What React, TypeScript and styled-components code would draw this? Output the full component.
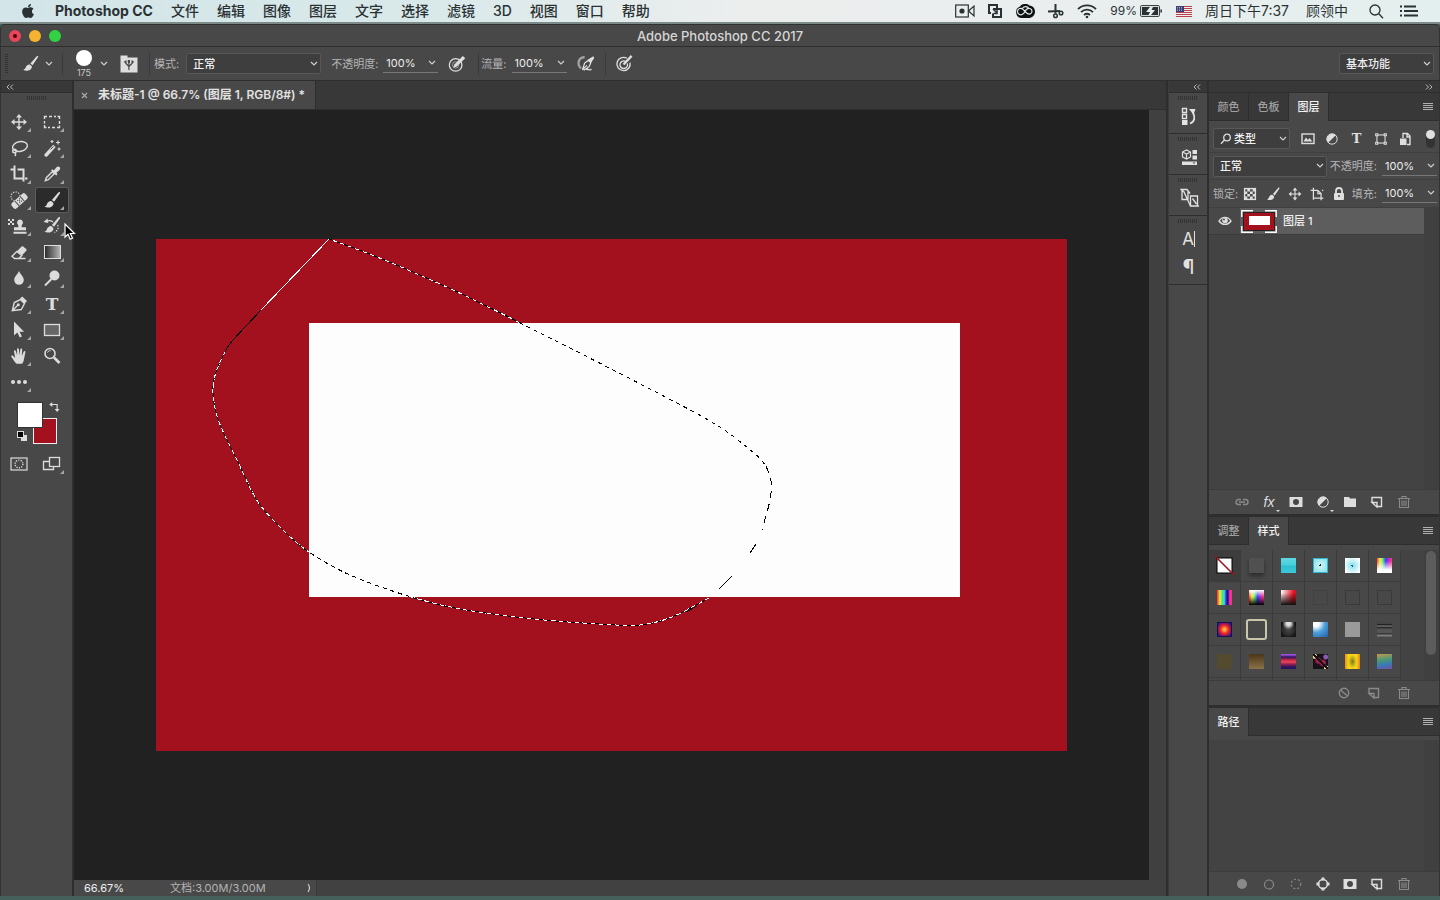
import React, { useId } from 'react';
import styled, { createGlobalStyle, css } from 'styled-components';
import { FaApple } from 'react-icons/fa';

const color = {
  panel: '#484848',
  list: '#434343',
  dark: '#383838',
  line: '#2e2e2e',
  soft: '#3c3c3c',
  text: '#dedede',
  dim: '#b4b4b4',
  field: '#3e3e3e',
  red: '#a3111f',
};

const GlobalStyle = createGlobalStyle`
  *, *::before, *::after { box-sizing: border-box; }
  body {
    margin: 0;
    background: #45605a;
    font-family: Inter, "Noto Sans CJK SC", sans-serif;
    font-size: 11px;
    line-height: 16px;
    color: ${color.text};
  }
  button, input, select {
    font: inherit;
    color: inherit;
    margin: 0;
    padding: 0;
    border: 0;
    background: none;
    border-radius: 0;
  }
  svg { display: block; flex: none; }
`;

/* ---------- icons ---------- */

const line = { fill: 'none', stroke: 'currentColor', strokeWidth: 1.4 } as const;
const solid = { fill: 'currentColor' } as const;

const brushShape = (
  <g {...solid}>
    <path d="M17.8 2.2c.5.4.3 1-.1 1.6l-5.6 8-2.2-1.8 6.4-7.5c.5-.5 1.100-.7 1.500-.3z" />
    <path d="M9.200 11l2.200 1.900c.3 2.600-1.900 4.600-4.800 4.700-1.500 0-3-.3-4.200-1.100 1.600-.2 2-1.100 2.600-2.500.7-1.700 2.300-3.200 4.200-3z" />
  </g>
);

const icons: Record<string, React.ReactNode> = {
  move: (
    <g>
      <path {...line} d="M10 4v12M4 10h12" />
      <path {...solid} d="M10 2l3 3.500H7zM10 18l3-3.500H7zM2 10l3.500-3v6zM18 10l-3.500-3v6z" />
    </g>
  ),
  marquee: <path {...line} d="M2.500 7V4.500H5M7 4.500h3M12 4.500h2M15.500 4.500h2V7M17.500 9v3M17.500 13.500v2H15M13 15.500h-3M8 15.500H6M4.500 15.500h-2V13M2.500 11.500V9" />,
  lasso: (
    <g {...line}>
      <ellipse cx="11" cy="8.500" rx="7.500" ry="4.800" transform="rotate(-12 11 8.500)" />
      <circle cx="5.500" cy="13" r="1.800" />
      <path d="M5.500 14.500c1.600 1 1.400 2.500.2 3.500" />
    </g>
  ),
  wand: (
    <g>
      <path {...solid} d="M2.500 16.200l8.700-9.500 2.500 2.400-8.500 9.300c-1.600.9-3.600-.7-2.700-2.200z" />
      <path d="M8.500 11.500l3-3.200" stroke="#484848" strokeWidth="1" />
      <path {...line} strokeWidth="1.200" d="M10 2v3M8.500 3.500h3M16 2.500v4M14 4.500h4M17 9.500v3M15.500 11h3" />
    </g>
  ),
  crop: <path {...line} strokeWidth="2" d="M5.500 1.500v13h9M8.500 5.500h6v9M1.500 5.500h4M14.500 14.500v3M16 14.500h2.500" />,
  eyedropper: (
    <g>
      <path {...line} d="M3.300 16.700l1-3 6-6 2 2-6 6z" />
      <path {...solid} d="M9 6.500l1.400-1.300 1.400 1.200 2.500-3c1-1.300 2.500-1.200 3.300-.3.900 1 .7 2.300-.3 3.200l-2.900 2.500 1.200 1.300L14.200 11.500z" />
    </g>
  ),
  healing: (
    <g>
      <circle {...line} cx="6.500" cy="6.500" r="4.500" strokeDasharray="1.200 1.400" strokeWidth="1.200" />
      <g transform="rotate(-42 10.500 11)">
        <rect {...solid} x="1.500" y="7.500" width="18" height="7" rx="2" />
        <path d="M7 7.500v7M14 7.500v7" stroke="#484848" />
        <path d="M9 9.500h1M11.500 9.500h1M9 12.500h1M11.500 12.500h1M10.200 11h1" stroke="#484848" strokeWidth="1.300" />
      </g>
    </g>
  ),
  brush: brushShape,
  stamp: (
    <g {...solid}>
      <path d="M11 3.500a3 3 0 012 5.200c-.5.800-.5 1.600-.3 2.500h4.300v3H5v-3h4.300c.2-.9.200-1.700-.3-2.500a3 3 0 012-5.200zM4.500 15.700h13v2h-13z" />
      <path d="M-1 3h2v2h-2zM3 3h2v2H3zM1 5h2v2H1zM-1 7h2v2h-2zM3 7h2v2H3z" />
    </g>
  ),
  history: (
    <g>
      <g transform="translate(0 -1)">{brushShape}</g>
      <path {...line} d="M4 5.500c3-1.500 5-1 7 .500" />
      <path {...solid} d="M1.500 6l4-3.500.800 4.500z" />
      <path {...line} strokeDasharray="1.300 1.500" d="M15.500 9c1.500 2.500.5 5.500-3 7.500" />
    </g>
  ),
  eraser: (
    <g>
      <path {...solid} d="M8 9.200l4.300-4.400c.6-.6 1.200-.7 1.900-.2l3 2.500c.6.500.6 1.100.1 1.700l-4.200 4.500z" />
      <path {...line} d="M7.800 9.500L3 14.300l2.500 2.200h4.300l3-3zM9 16.500h7.500" />
    </g>
  ),
  drop: <path {...solid} d="M10 3c1 3 4.800 5.500 4.800 9a4.800 4.800 0 01-9.600 0C5.200 8.500 9 6 10 3z" />,
  dodge: (
    <g>
      <circle {...solid} cx="12.500" cy="7.500" r="5" />
      <path {...line} strokeWidth="2" d="M9.500 11L3 17.500" />
    </g>
  ),
  pen: (
    <g>
      <path {...line} d="M3.300 16.700l2-8.200 6-3 4.200 4-3.200 6zM3.500 16.500l5-5" />
      <circle {...solid} cx="9.300" cy="10.800" r="1.500" />
      <path {...solid} d="M11 4.500L13.200 2.500 18 7l-2.300 2.500z" />
    </g>
  ),
  arrow: <path {...solid} d="M5 1.500v14l3.400-3 2.300 5 2.200-1-2.300-4.800h4.500z" />,
  rect: <rect x="2.500" y="4.500" width="15" height="11" fill="#666" stroke="currentColor" strokeWidth="1.300" />,
  hand: (
    <path
      {...solid}
      d="M7.500 17.800C5.500 16 4 13 2.300 10.800c-.5-1 .7-1.700 1.600-1l2.300 2.200L5 5.500c-.2-1.300 1.400-1.600 1.800-.4l1.400 4.500L8 3.300c0-1.400 1.800-1.400 1.900 0l.4 6 1-6c.3-1.300 2-1 1.900.3l-.4 6.300 1.800-4.200c.6-1.200 2.100-.6 1.800.6L14.800 14c-.3 1.600-.8 2.800-1.800 3.800z"
    />
  ),
  zoom: (
    <g {...line}>
      <circle cx="8" cy="7.500" r="5" strokeWidth="1.600" />
      <path strokeWidth="2.600" d="M12 11.500l5.500 5.500" />
      <path strokeWidth="1" d="M5.500 6.500c.6-1.300 1.600-1.800 3-1.800" />
    </g>
  ),
  more: (
    <g {...solid}>
      <circle cx="4" cy="10" r="2" />
      <circle cx="10" cy="10" r="2" />
      <circle cx="16" cy="10" r="2" />
    </g>
  ),
  quickmask: (
    <g {...line}>
      <rect x="2" y="4" width="16" height="12" strokeWidth="1.200" />
      <circle cx="10" cy="10" r="3.900" strokeDasharray="1.200 1.250" />
    </g>
  ),
  screens: (
    <g stroke="currentColor" strokeWidth="1.300" fill="none">
      <path d="M7 7.500H1.500v8h10V13" />
      <rect x="7.500" y="3.500" width="10" height="9" />
    </g>
  ),
  swap: (
    <g>
      <path {...line} strokeWidth="1.500" d="M5.500 6h8v7" />
      <path {...solid} d="M3 6l4-3.200v6.400zM13.500 16l3.300-4h-6.600z" />
    </g>
  ),
  brushpanel: (
    <g>
      <path {...solid} d="M1.500 1.500h7v2h10v15h-17z" />
      <path d="M9.900 16v-4M9.900 12.500L6.500 9M9.900 12V8M9.900 12.500L13.500 9" fill="none" stroke="#484848" strokeWidth="1.200" />
      <path d="M4.500 8l3-2v3.500zM8.800 6h2.200v3H8.800zM15.500 8l-3-2v3.500z" fill="#484848" />
    </g>
  ),
  pressure: (
    <g>
      <circle {...line} cx="8.500" cy="11" r="7" />
      <circle {...line} cx="8.500" cy="11" r="3.500" strokeWidth="1" opacity=".6" />
      <path {...solid} d="M6 14.200l1-3.700L16.500 1l2.700 2.500-9.500 9.300z" />
    </g>
  ),
  airbrush: (
    <g>
      <path {...line} strokeWidth="2.600" opacity=".6" d="M8.500 2.500C1.500 2.500-.5 10.500 4.500 15" />
      <path {...line} d="M6 16.500l2.500-7.500 4-3 2.800 2.500-1.800 4.500-6 4M6 16.500l5-5M12.500 13l-1.500 3 4 .5 1-1" />
      <path {...solid} d="M11.500 5.500L18 1.500l1.200 1.800-3.700 5.700z" />
    </g>
  ),
  target: (
    <g {...line}>
      <path d="M12.500 4.500A7 7 0 1015.800 9" />
      <path d="M11 7.700a4 4 0 102 2.300" />
      <path strokeWidth="2.400" d="M9 11l8.500-9" />
    </g>
  ),
  image: (
    <g>
      <rect {...line} x="4" y="5" width="12" height="9.500" />
      <path {...solid} d="M5.500 12.500l2.500-4 2 2.500 1.500-2 3 3.500z" />
    </g>
  ),
  halfcircle: (
    <g>
      <circle {...line} cx="10" cy="10" r="5.200" strokeWidth="1" />
      <path {...solid} d="M13.800 6.200a5.400 5.400 0 00-7.600 7.600z" />
    </g>
  ),
  shape: (
    <g>
      <rect {...line} x="5.500" y="5.500" width="9" height="9" strokeWidth="1.200" />
      <path {...solid} d="M3.500 3.500H7V7H3.500zM13 3.500h3.500V7H13zM3.500 13H7v3.500H3.500zM13 13h3.500v3.500H13z" />
      <path fill="#484848" d="M4.700 4.700h1.100v1.100H4.700zM14.200 4.700h1.100v1.100h-1.100zM4.700 14.200h1.100v1.100H4.700zM14.200 14.200h1.100v1.100h-1.100z" />
    </g>
  ),
  smart: (
    <g>
      <path {...line} d="M8 9V4.500h4.500L15 7v8.500h-3M12 4.500V8h3" />
      <path {...solid} d="M5 9.500h6.500V16H5z" />
    </g>
  ),
  checker: (
    <g>
      <rect {...line} x="4.600" y="4.600" width="10.800" height="10.800" />
      <path {...solid} d="M7.300 5h2.700v2.500H7.300zM12.700 5H15v2.500h-2.300zM5 7.500h2.300v2.600H5zM10 7.500h2.700v2.600H10zM7.300 10.100h2.700v2.500H7.300zM12.700 10.100H15v2.500h-2.300zM5 12.600h2.300V15H5zM10 12.600h2.700V15H10z" />
    </g>
  ),
  artboard: <path {...line} d="M6 3v13.500M3 6h8M14.500 14v3M17 14.500H6M11 6l3.500 3.500v5M15.500 6H17M11 6v3.500h3.500" />,
  lock: (
    <g>
      <rect {...solid} x="5" y="9" width="10" height="7" rx="1" />
      <path {...line} strokeWidth="1.800" d="M7 9V7a3 3 0 016 0v2" />
      <circle cx="10" cy="12" r="1" fill="#484848" />
    </g>
  ),
  eye: (
    <g>
      <path {...line} d="M4 10c3-4.800 9-4.800 12 0-3 4.500-9 4.500-12 0z" />
      <circle {...solid} cx="10" cy="9.500" r="2.800" />
      <circle cx="9" cy="8.500" r=".9" fill="#484848" />
    </g>
  ),
  link: <path {...line} d="M9 7.500H6.500a2.500 2.500 0 000 5H9M11 7.500h2.500a2.500 2.500 0 010 5H11M7 10h6" />,
  mask: (
    <g>
      <path {...solid} d="M3.500 5h13v10h-13z" />
      <circle cx="10" cy="10" r="3" fill="#484848" />
    </g>
  ),
  folder: <path {...solid} d="M4 5h5l1 1.500h6V15H4z" />,
  page: (
    <g {...line}>
      <path d="M5 10V5.500h9.500v9H10" />
      <path d="M5 10.500h5v4.500zM5 10.500l5 4.500" />
    </g>
  ),
  trash: <path {...line} strokeWidth="1.100" d="M4 6.500h12M8 6V4.500h4V6M5.500 7v8.500h9V7M8 8.500v5.500M10 8.500v5.500M12 8.500v5.500" />,
  none: (
    <g {...line}>
      <circle cx="10" cy="10" r="4.700" />
      <path d="M6.500 7l7 6" />
    </g>
  ),
  dot: <circle {...solid} cx="10" cy="10" r="5" />,
  ring: <circle {...line} cx="10" cy="10.500" r="4.500" strokeWidth="1.200" />,
  dashring: <circle {...line} cx="10" cy="10" r="4.800" strokeDasharray="2 2" strokeWidth="1.100" />,
  pathring: (
    <g>
      <circle {...line} cx="10" cy="10" r="4.500" />
      <path {...solid} d="M8.500 3.500h3v3h-3zM8.500 13.500h3v3h-3zM3.500 8.500h3v3h-3zM13.500 8.500h3v3h-3z" />
    </g>
  ),
  historyPanel: (
    <g {...line}>
      <path d="M3.500 2.500h4v4h-4zM3.500 8.500h4v4h-4z" />
      <path {...solid} stroke="none" d="M3 14h5.500v5H3zM10 3h6.500l-2 5.500z" />
      <path strokeWidth="1.800" d="M11 17.500c5-2 5.500-6.500 2.500-12" />
    </g>
  ),
  props: (
    <g>
      <path {...line} strokeWidth="1.200" d="M3.500 5L7.500 3l4 2v5l-4 2-4-2zM3.500 5l4 2 4-2M7.500 7v5" />
      <path {...solid} d="M13.500 3H18v4h-4.500zM13.500 8.500H18v4h-4.500zM3 14.500h15v3.500H3z" />
      <path fill="#484848" d="M13.500 15.500h3L15 17z" />
    </g>
  ),
  layercomp: (
    <g {...line} strokeWidth="1.300">
      <path d="M9 11.500H3V1.500h5l3 4M1.500 1l3.500 3 6.500 14M9 11.500V3" />
      <path d="M11.500 8h7v10h-7zM11.500 18H20M13.500 10.500l4 5.500" />
    </g>
  ),
};

function Icon({ name, size = 20 }: { name: string; size?: number }) {
  return (
    <svg width={size} height={size} viewBox="0 0 20 20" overflow="visible" aria-hidden="true">
      {icons[name]}
    </svg>
  );
}

function Chevron() {
  return (
    <svg width="8" height="6" viewBox="0 0 8 6" aria-hidden="true">
      <path d="M1 1l3 3 3-3" fill="none" stroke="#cfcfcf" strokeWidth="1.200" />
    </svg>
  );
}

/* ---------- system menu bar ---------- */

const MenuBar = styled.header`
  display: flex;
  align-items: center;
  height: 24px;
  padding: 0 22px 0 20px;
  border-bottom: 2px solid #7d8b88;
  background: linear-gradient(90deg, #d3e5e8 0%, #d9e9ea 30%, #eceeee 52%, #ebeeee 70%, #e3efee 100%);
  color: #2a3133;
  font-size: 14px;
  line-height: 20px;
`;

const MenuList = styled.nav`
  display: flex;
  gap: 18px;
  margin-left: 19px;
`;

const MenuItem = styled.button<{ $bold?: boolean }>`
  font-weight: ${(p) => (p.$bold ? 700 : 500)};
  white-space: nowrap;
`;

const StatusList = styled.div`
  display: flex;
  align-items: center;
  gap: 13px;
  margin-left: auto;
  white-space: nowrap;
`;

const StatusGroup = styled.span<{ $gap?: number; $lead?: number; $small?: boolean }>`
  display: flex;
  align-items: center;
  gap: ${(p) => p.$gap ?? 4}px;
  margin-left: ${(p) => p.$lead ?? 0}px;
  font-size: ${(p) => (p.$small ? 12 : 14)}px;
`;

function StatusIcons() {
  return (
    <>
      <svg width="20" height="14" viewBox="0 0 20 14">
        <rect x=".7" y="1" width="12.600" height="12" fill="none" stroke="#2a3133" strokeWidth="1.200" />
        <circle cx="7" cy="7" r="2.600" fill="#2a3133" />
        <path d="M13.500 7l5.500-5v10z" fill="none" stroke="#2a3133" strokeWidth="1.200" />
      </svg>
      <svg width="14" height="14" viewBox="0 0 14 14" fill="none" stroke="#2a3133" strokeWidth="2">
        <path d="M3 9H1V1h8v3M5 5h8v8H5V9.500" />
        <path d="M5 5l4 4M9 6v3.500H5.500" strokeWidth="1.500" />
      </svg>
      <svg width="20" height="14" viewBox="0 0 20 14">
        <path d="M6 14a6 6 0 01-1-11.500C7-.5 12-1 14.500 1.500 18 2 20 4.500 20 7.500c0 4-3 6.500-6.500 6.500z" fill="#111" />
        <path d="M10 8l-2.500 2.200c-2.500 1.500-5-.2-5-2.700 0-3 3.500-4.200 5.500-2.200l4 3.900c2 1.700 4.800.8 5-1.700.1-3-3.500-4.200-5.500-2L9 8M7 5c1.500-3 5.500-3 7-.5" fill="none" stroke="#dde9ea" strokeWidth="1.200" />
      </svg>
      <svg width="16" height="16" viewBox="0 0 16 16" fill="none" stroke="#2a3133">
        <path d="M7.500 1v9.500M0 8.500l12-.500" strokeWidth="2" />
        <circle cx="7.500" cy="12.700" r="1.800" strokeWidth="1.500" />
        <circle cx="13" cy="10" r="1.800" strokeWidth="1.500" />
      </svg>
      <svg width="20" height="15" viewBox="0 0 20 15" fill="none" stroke="#2a3133" strokeWidth="1.800">
        <path d="M1 5.200c5-5 13-5 18 0M4 8.200c3.500-3.400 8.500-3.400 12 0M7 11c2-1.600 4-1.600 6 0" />
        <circle cx="10" cy="13" r="1.300" fill="#2a3133" stroke="none" />
      </svg>
      <StatusGroup $small $gap={3}>
        99%
        <svg width="23" height="12" viewBox="0 0 23 12">
          <rect x=".6" y=".6" width="18.800" height="10.800" rx="1" fill="none" stroke="#2a3133" />
          <path d="M2 2h8L6 7h4L8.500 10H2zM13 2h5v8h-7l4-5h-3.500z" fill="#2a3133" />
          <path d="M20.500 4c2 .5 2 3.500 0 4z" fill="#2a3133" />
        </svg>
      </StatusGroup>
      <svg width="16" height="11" viewBox="0 0 16 11">
        <path fill="#f1eeee" d="M0 0h16v11H0z" />
        <path d="M0 .5h16M0 2.500h16M0 4.500h16M0 6.500h16M0 8.500h16M0 10.500h16" stroke="#b3444e" />
        <path fill="#3a3f73" d="M0 0h8v6H0z" />
        <path d="M1 1.500h6M1 3h6M1 4.500h6" stroke="#c9cbe0" strokeDasharray="1 1" strokeWidth=".7" />
      </svg>
      <StatusGroup $gap={17}>
        <span>周日下午7:37</span>
        <span>顾领中</span>
      </StatusGroup>
      <StatusGroup $gap={16} $lead={8}>
        <svg width="15" height="15" viewBox="0 0 15 15" fill="none" stroke="#2a3133" strokeWidth="1.300">
          <circle cx="6" cy="6" r="5" />
          <path d="M9.800 9.800L14 14.200" />
        </svg>
        <svg width="18" height="12" viewBox="0 0 18 12" stroke="#2a3133" strokeWidth="2">
          <path d="M0 1.500h2M0 6h2M0 10.500h2M4 1.500h12M4 6h14M4 10.500h14" />
        </svg>
      </StatusGroup>
    </>
  );
}

/* ---------- window shell ---------- */

const Page = styled.div`
  display: flex;
  flex-direction: column;
  min-height: 100vh;
  padding-bottom: 4px;
`;

const AppWindow = styled.div`
  flex: 1;
  display: flex;
  flex-direction: column;
  border: 1px solid #333;
  border-top-color: #2c3231;
  border-bottom: 0;
  border-radius: 5px 5px 0 0;
  background: ${color.panel};
`;

const TitleBar = styled.div`
  display: grid;
  grid-template-columns: 1fr auto 1fr;
  align-items: center;
  height: 22px;
  padding: 0 8px;
  border-bottom: 1px solid ${color.line};
  h1 {
    margin: 0;
    font-size: 13px;
    font-weight: 500;
    line-height: 20px;
    color: #d6d6d6;
  }
`;

const Lights = styled.div`
  display: flex;
  gap: 8px;
`;

const Light = styled.button<{ $color: string; $edited?: boolean }>`
  display: grid;
  place-items: center;
  width: 12px;
  height: 12px;
  border-radius: 50%;
  background: ${(p) => p.$color};
  ${(p) =>
    p.$edited &&
    css`
      &::after {
        content: '';
        width: 4px;
        height: 4px;
        border-radius: 50%;
        background: #4a0508;
      }
    `}
`;

const OptionsBar = styled.div`
  display: flex;
  align-items: center;
  height: 34px;
  padding: 0 5px 0 4px;
  border-bottom: 1px solid ${color.line};
  white-space: nowrap;
`;

const Grip = styled.span<{ $vertical?: boolean }>`
  display: block;
  align-self: center;
  ${(p) =>
    p.$vertical
      ? css`
          width: 3px;
          height: 20px;
          margin-right: 7px;
          background: repeating-linear-gradient(180deg, #333 0 1px, transparent 1px 2px);
        `
      : css`
          width: 20px;
          height: 4px;
          margin: 0 auto;
          background: repeating-linear-gradient(90deg, #333 0 1px, transparent 1px 2px);
        `}
`;

const Divider = styled.span<{ $space: number }>`
  width: 1px;
  height: 22px;
  margin: 0 ${(p) => p.$space}px;
  background: #3a3a3a;
`;

const IconButton = styled.button<{ $w?: number; $dim?: boolean }>`
  display: inline-flex;
  align-items: center;
  justify-content: center;
  width: ${(p) => p.$w ?? 22}px;
  height: 22px;
  color: ${(p) => (p.$dim ? '#8a8a8a' : color.text)};
`;

const BrushPreset = styled.button`
  display: flex;
  flex-direction: column;
  align-items: center;
  gap: 1px;
  width: 24px;
  padding-top: 2px;
  font-size: 9px;
  line-height: 12px;
  color: #c8c8c8;
  &::before {
    content: '';
    width: 16px;
    height: 16px;
    border-radius: 50%;
    background: #fff;
  }
`;

const SelectBox = styled.span<{ $w: number }>`
  display: grid;
  align-items: center;
  width: ${(p) => p.$w}px;
  color: #f0f0f0;
  select,
  svg {
    grid-area: 1 / 1;
  }
  svg {
    pointer-events: none;
    justify-self: end;
    margin-right: 3px;
  }
  svg.lead {
    justify-self: start;
    margin-left: 7px;
  }
`;

const SelectControl = styled.select<{ $pad?: number }>`
  appearance: none;
  width: 100%;
  height: 21px;
  padding-left: ${(p) => p.$pad ?? 6}px;
  border: 1px solid #585858;
  border-radius: 2px;
  background: ${color.field};
  font-weight: 500;
`;

function Dropdown({ label, value, w, pad, lead }: { label: string; value: string; w: number; pad?: number; lead?: React.ReactNode }) {
  return (
    <SelectBox $w={w}>
      <SelectControl aria-label={label} $pad={pad}>
        <option>{value}</option>
      </SelectControl>
      {lead}
      <Chevron />
    </SelectBox>
  );
}

const FieldLabel = styled.label<{ $gap?: number }>`
  display: inline-flex;
  align-items: center;
  gap: ${(p) => p.$gap ?? 5}px;
  color: ${color.dim};
`;

const FieldGroup = styled.div`
  display: flex;
  align-items: center;
  gap: 10px;
`;

const ValueBox = styled.span`
  display: flex;
  align-items: center;
  width: 55px;
  height: 19px;
  padding: 0 2px 0 3px;
  border-bottom: 1px solid #777;
  color: #ececec;
  input {
    width: 0;
    flex: 1;
  }
`;

function PercentField({ label }: { label: string }) {
  const id = useId();
  return (
    <FieldLabel htmlFor={id}>
      {label}:
      <ValueBox>
        <input id={id} defaultValue="100%" />
        <Chevron />
      </ValueBox>
    </FieldLabel>
  );
}

const Spacer = styled.span`
  flex: 1;
`;

/* ---------- workspace ---------- */

const Workspace = styled.div`
  flex: 1;
  display: flex;
  align-items: stretch;
`;

const DockHeader = styled.div<{ $end?: boolean }>`
  display: flex;
  align-items: center;
  justify-content: ${(p) => (p.$end ? 'flex-end' : 'flex-start')};
  height: 12px;
  padding: 0 6px 0 5px;
  border-bottom: 1px solid ${color.line};
  background: ${color.dark};
`;

const DoubleChevron = ({ right }: { right?: boolean }) => (
  <svg width="8" height="6" viewBox="0 0 8 6" fill="none" stroke="#b5b5b5">
    <path d={right ? 'M1 .5L3.500 3 1 5.500M4.500 .5L7 3 4.500 5.500' : 'M3.500 .5L1 3l2.500 2.500M7 .5L4.500 3 7 5.500'} />
  </svg>
);

const CollapseButton = styled.button`
  display: flex;
`;

const ToolPanel = styled.aside`
  position: relative;
  flex: none;
  width: 73px;
  border-right: 2px solid ${color.line};
`;

const ToolGrid = styled.div<{ $top: number }>`
  display: grid;
  grid-template-columns: 32px 32px;
  column-gap: 1px;
  row-gap: 2px;
  margin: ${(p) => p.$top}px 0 0 2px;
`;

const GripRow = styled.div`
  padding-top: 3px;
  height: 4px;
`;

const ToolButton = styled.button<{ $active?: boolean; $flyout?: boolean }>`
  display: grid;
  place-items: center;
  position: relative;
  height: 24px;
  color: #dcdcdc;
  ${(p) =>
    p.$active &&
    css`
      background: #2b2b2b;
      border-radius: 2px;
      box-shadow: 0 0 0 1px #5b5b5b;
    `}
  ${(p) =>
    p.$flyout &&
    css`
      &::after {
        content: '';
        position: absolute;
        right: 4px;
        bottom: 2px;
        border: 2px solid transparent;
        border-right-color: #a5a5a5;
        border-bottom-color: #a5a5a5;
      }
    `}
`;

const TypeGlyph = styled.span<{ $size: number; $family?: 'sans' }>`
  font-family: ${(p) => (p.$family === 'sans' ? 'Inter, sans-serif' : '"DejaVu Serif", serif')};
  font-size: ${(p) => p.$size}px;
  line-height: 20px;
  font-weight: ${(p) => (p.$family === 'sans' ? 400 : 700)};
`;

const GradientChip = styled.span`
  width: 17px;
  height: 14px;
  border: 1px solid #ddd;
  background: linear-gradient(90deg, #2c2c2c, #b5b5b5);
`;

const ColorWell = styled.div`
  display: grid;
  grid-template-columns: 16px 10px 14px;
  grid-template-rows: 16px 10px 16px;
  margin: 8px 0 0 16px;
`;

const Swatch = styled.button<{ $back?: boolean }>`
  grid-area: ${(p) => (p.$back ? '2 / 2 / 4 / 4' : '1 / 1 / 3 / 3')};
  z-index: ${(p) => (p.$back ? 0 : 1)};
  border: 1px solid ${(p) => (p.$back ? '#eee' : '#333')};
  background: ${(p) => (p.$back ? color.red : '#fff')};
`;

const SwapButton = styled.button`
  grid-area: 1 / 3;
  align-self: start;
  margin: -2px 0 0 4px;
`;

const DefaultButton = styled.button`
  grid-area: 3 / 1;
  align-self: center;
`;

const Cursor = styled.svg`
  position: absolute;
  left: 63px;
  top: 142px;
  z-index: 2;
  pointer-events: none;
`;

const Document = styled.main`
  flex: 1;
  min-width: 0;
  display: flex;
  flex-direction: column;
  border-right: 2px solid ${color.line};
`;

const DocTabs = styled.div`
  display: flex;
  height: 29px;
  background: ${color.dark};
  border-bottom: 1px solid ${color.line};
`;

const DocTab = styled.div`
  display: flex;
  align-items: center;
  gap: 10px;
  padding: 0 10px 0 7px;
  background: ${color.panel};
  border-right: 1px solid ${color.line};
  font-size: 12px;
  font-weight: 600;
  white-space: nowrap;
  color: #e2e2e2;
`;

const Stage = styled.div`
  flex: 1;
  display: flex;
`;

const Canvas = styled.div`
  flex: 1;
  display: grid;
  place-items: center;
  background: #212121;
`;

const ScrollTrack = styled.div`
  width: 17px;
  background: #404040;
`;

const StatusBar = styled.footer`
  display: flex;
  height: 16px;
  background: #414141;
`;

const StatusInfo = styled.div`
  display: flex;
  align-items: center;
  width: 243px;
  padding: 0 4px 0 10px;
  border-right: 1px solid #3a3a3a;
  background: ${color.panel};
  color: ${color.dim};
  input {
    width: 86px;
    color: #eee;
  }
`;

type Pt = [number, number];

/* Smooth curve through a list of points (Catmull-Rom as cubic Béziers). */
function curve(pts: Pt[]): string {
  let d = `M${pts[0][0]} ${pts[0][1]}`;
  for (let i = 0; i < pts.length - 1; i++) {
    const p0 = pts[i - 1] ?? pts[i];
    const p1 = pts[i];
    const p2 = pts[i + 1];
    const p3 = pts[i + 2] ?? p2;
    d += `C${p1[0] + (p2[0] - p0[0]) / 6} ${p1[1] + (p2[1] - p0[1]) / 6} ${p2[0] - (p3[0] - p1[0]) / 6} ${p2[1] - (p3[1] - p1[1]) / 6} ${p2[0]} ${p2[1]}`;
  }
  return d;
}

const antsTop = curve([[173, 0], [216, 16], [259, 34], [312, 58], [402, 103], [492, 149], [559, 185], [598, 214], [610, 227]]);
const antsRight = curve([[610, 227], [615, 242], [614, 261], [606, 291]]);
const antsBottom = curve([[553, 359], [516, 378], [484, 386], [443, 385], [378, 380], [304, 370], [255, 358], [194, 336], [153, 313], [129, 293], [102, 263], [82, 223], [63, 183], [57, 154], [60, 133], [71, 109]]);

function Artboard() {
  return (
    <svg width="911" height="512" viewBox="0 0 911 512" role="img" aria-label="图层 1">
      <rect width="911" height="512" fill={color.red} />
      <rect x="153" y="84" width="651" height="274" fill="#fdfdfd" />
      <g fill="none" strokeWidth="1" shapeRendering="crispEdges">
        <g stroke="#fff">
          <path d={antsTop} />
          <path d={antsBottom} />
          <path d="M173 0L105 71" />
        </g>
        <g stroke="#000">
          <path d={antsTop} strokeDasharray="4 4" />
          <path d={antsRight} strokeDasharray="7 6" />
          <path d="M600 305L594 314M576 337L563 350" />
          <path d="M541 367L530 373" />
          <path d={antsBottom} strokeDasharray="4 4" strokeDashoffset="4" />
          <path d="M105 71L76 102L71 109" />
        </g>
      </g>
    </svg>
  );
}

/* ---------- collapsed dock ---------- */

const IconDock = styled.aside`
  flex: none;
  width: 41px;
  border-left: 1px solid ${color.soft};
  border-right: 2px solid ${color.line};
`;

const DockGroup = styled.div`
  display: flex;
  flex-direction: column;
  align-items: center;
  padding: 3px 0;
  border-bottom: 1px solid ${color.line};
`;

const DockButton = styled.button`
  display: flex;
  align-items: center;
  justify-content: center;
  width: 32px;
  height: 28px;
  padding-left: 1px;
  color: #e2e2e2;
  &:first-of-type {
    margin-top: 2px;
  }
`;

const Caret = styled.span`
  width: 1px;
  height: 16px;
  background: #e2e2e2;
`;

/* ---------- right panels ---------- */

const Panels = styled.aside`
  flex: none;
  display: flex;
  flex-direction: column;
  width: 230px;
`;

const Panel = styled.section<{ $grow?: boolean; $min?: number }>`
  display: flex;
  flex-direction: column;
  flex: ${(p) => (p.$grow ? '1' : 'none')};
  min-height: ${(p) => p.$min ?? 0}px;
  & + & {
    border-top: 3px solid ${color.line};
  }
`;

const TabRow = styled.div`
  display: flex;
  align-items: stretch;
  height: 28px;
  background: ${color.dark};
`;

const Tab = styled.button<{ $active?: boolean }>`
  width: 40px;
  border-right: 1px solid ${color.line};
  border-bottom: ${(p) => (p.$active ? '0' : `1px solid ${color.line}`)};
  background: ${(p) => (p.$active ? color.panel : 'transparent')};
  color: ${(p) => (p.$active ? '#f2f2f2' : '#a0a0a0')};
  font-weight: 500;
`;

const TabFill = styled.div`
  flex: 1;
  display: flex;
  align-items: center;
  justify-content: flex-end;
  padding-right: 6px;
  border-bottom: 1px solid ${color.line};
`;

const PanelMenu = styled.button`
  width: 10px;
  height: 7px;
  background: repeating-linear-gradient(180deg, #b0b0b0 0 1px, transparent 1px 2px);
`;

function Tabs({ items, active }: { items: string[]; active: string }) {
  return (
    <TabRow role="tablist">
      {items.map((t) => (
        <Tab key={t} role="tab" aria-selected={t === active} $active={t === active}>
          {t}
        </Tab>
      ))}
      <TabFill>
        <PanelMenu aria-label="面板菜单" />
      </TabFill>
    </TabRow>
  );
}

const Row = styled.div<{ $h: number; $top?: number }>`
  display: flex;
  align-items: center;
  height: ${(p) => p.$h}px;
  padding: ${(p) => p.$top ?? 0}px 2px 0 4px;
  border-bottom: 1px solid #3f3f3f;
  white-space: nowrap;
`;

const FilterIcons = styled.div`
  display: flex;
  flex: 1;
  justify-content: space-between;
  margin: 0 11px 0 8px;
`;

const FilterSwitch = styled.input`
  appearance: none;
  width: 9px;
  height: 18px;
  margin: 0;
  margin-right: 2px;
  border-radius: 5px;
  background: #333;
  &::before {
    content: '';
    display: block;
    width: 9px;
    height: 9px;
    border-radius: 50%;
    background: #e0e0e0;
  }
`;

const LayerList = styled.div`
  flex: 1;
  display: flex;
  background: ${color.list};
`;

const LayerItems = styled.ul`
  flex: 1;
  margin: 0;
  padding: 0;
  list-style: none;
`;

const LayerItem = styled.li`
  display: flex;
  align-items: center;
  height: 27px;
  border-bottom: 1px solid ${color.soft};
  background: ${color.panel};
`;

const LayerName = styled.button`
  flex: 1;
  align-self: stretch;
  display: flex;
  align-items: center;
  gap: 6px;
  padding-left: 1px;
  background: #5d5d5d;
  color: #f0f0f0;
  font-weight: 500;
`;

const PanelScroll = styled.div<{ $thumb?: boolean }>`
  width: 15px;
  padding: 1px 3px 0 2px;
  background: #404040;
  ${(p) =>
    p.$thumb &&
    css`
      &::before {
        content: '';
        display: block;
        width: 10px;
        height: 104px;
        border-radius: 5px;
        background: #5c5c5c;
      }
    `}
`;

const PanelFooter = styled.footer<{ $gap?: number }>`
  display: flex;
  align-items: center;
  justify-content: flex-end;
  gap: ${(p) => p.$gap ?? 5}px;
  height: 25px;
  padding-right: 24px;
  padding-bottom: 1px;
  border-top: 1px solid ${color.soft};
`;

const FxGlyph = styled.span`
  font-family: "Liberation Sans", sans-serif;
  font-style: italic;
  font-size: 14px;
`;

const MenuMark = styled.span`
  position: relative;
  display: inline-flex;
  align-items: center;
  justify-content: center;
  width: 16px;
  height: 16px;
  &::after {
    content: '';
    position: absolute;
    right: -3px;
    bottom: -2px;
    border: 2px solid transparent;
    border-top-color: #ddd;
    border-bottom: 0;
  }
`;

const StyleArea = styled.div`
  display: flex;
  height: 130px;
  margin-top: 5px;
  overflow: hidden;
  background: ${color.list};
`;

const StyleGrid = styled.div`
  display: grid;
  grid-template-columns: repeat(6, 32px);
  grid-auto-rows: 32px;
  flex: none;
  background: ${color.panel};
`;

const StyleCell = styled.button<{ $on?: boolean }>`
  display: grid;
  place-items: center;
  border-right: 1px solid ${color.soft};
  border-bottom: 1px solid ${color.soft};
  background: ${(p) => (p.$on ? '#3d3d3d' : 'transparent')};
`;

const Chip = styled.span<{ $bg: string; $edge?: string; $big?: boolean; $shadow?: string }>`
  width: ${(p) => (p.$big ? 21 : 15)}px;
  height: ${(p) => (p.$big ? 21 : 15)}px;
  background: ${(p) => p.$bg};
  border: ${(p) => (p.$edge ? `${p.$big ? 2 : 1}px solid ${p.$edge}` : '0')};
  border-radius: ${(p) => (p.$big ? 3 : 0)}px;
  box-shadow: ${(p) => p.$shadow ?? 'none'};
`;

const rainbow = 'linear-gradient(90deg,#ff4040,#ffe94a 20%,#5cf06a 38%,#3b3bff 58%,#b02bd0 75%,#ff3b6a)';

const chips: { bg: string; edge?: string; big?: boolean; shadow?: string }[] = [
  { bg: '#505050', shadow: '0 3px 4px #2c2c2c' },
  { bg: 'linear-gradient(#62d6e0,#48cfdc 45%,#2ebfd2 55%,#39c9d8)' },
  { bg: 'radial-gradient(#222 0 1px,#c8f4f6 1px,#9ae4ec 7px)', edge: '#2fb5cc' },
  { bg: 'radial-gradient(#257 0 1px,#8fe4ee 1px,#fff 9px)' },
  { bg: `linear-gradient(transparent 20%,#fff 80%),${rainbow}` },
  { bg: 'linear-gradient(90deg,#ff4a3a 5%,#f2f23a 20%,#40e86a 35%,#38d8f0 48%,#3030e8 60%,#20103a 72%,#f030d0 85%,#ff3060)' },
  { bg: `linear-gradient(#fff,transparent 45%,#000),${rainbow}` },
  { bg: 'linear-gradient(transparent 20%,#111),linear-gradient(100deg,#fff,#e01020 75%)' },
  { bg: '#484848', edge: '#424242' },
  { bg: 'transparent', edge: '#3a3a3a' },
  { bg: 'transparent', edge: '#3a3a3a' },
  { bg: 'radial-gradient(#ffb04a 0 1px,#f02a20 4px,#a01850 6px,#2a18a0 8px)', edge: '#18104a' },
  { bg: 'transparent', edge: '#c8c8a8', big: true },
  { bg: 'radial-gradient(circle at 50% 10%,#ddd 0 2px,transparent 6px),radial-gradient(#4a4a4a,#2a2a2a 6px,#161616 8px)' },
  { bg: 'radial-gradient(circle at 20% 10%,#fff 0 3px,#4d9fdc 9px,#235fa8)' },
  { bg: '#9a9a9a' },
  { bg: 'linear-gradient(#444 0 2px,#222 2px 3px,#8a8a8a 4px,#2c2c2c 5px 6px,#555 7px 11px,#222 12px,#8a8a8a 13px,#555)' },
  { bg: '#544a30' },
  { bg: 'linear-gradient(#4a3618,#8a7248)' },
  { bg: 'linear-gradient(#9a50d8 0 1px,#281460 3px,#c82848 6px,#e84858 8px,#a02050 10px,#281460 13px)' },
  { bg: 'linear-gradient(45deg,transparent 46%,#181018 46% 54%,transparent 54%),radial-gradient(circle at 10% 15%,#e8e088 0 2px,transparent 3px),radial-gradient(circle at 90% 95%,#e8e088 0 2px,transparent 3px),radial-gradient(circle at 85% 20%,#8a5ab0 0 2px,transparent 3px),radial-gradient(circle at 65% 60%,#b02850 0 2px,transparent 4px),radial-gradient(circle at 35% 45%,#a02048 0 2px,transparent 4px),#181018' },
  { bg: 'radial-gradient(ellipse 5px 8px,#7a7a18,#f0d018 80%,transparent),linear-gradient(90deg,#e8901c,#f8d818 25%,#f8d818 75%,#e8801c)' },
  { bg: 'linear-gradient(170deg,#c89848,#4a9878 40%,#3a78b8 70%,#7a50a0)' },
];

const PathsBody = styled.div`
  flex: 1;
  display: flex;
  justify-content: flex-end;
  margin-top: 4px;
  background: ${color.list};
`;

/* ---------- page ---------- */

const menus = ['文件', '编辑', '图像', '图层', '文字', '选择', '滤镜', '3D', '视图', '窗口', '帮助'];

const tools: { icon: string; label: string; plain?: boolean }[] = [
  { icon: 'move', label: '移动' },
  { icon: 'marquee', label: '矩形选框' },
  { icon: 'lasso', label: '套索' },
  { icon: 'wand', label: '魔棒' },
  { icon: 'crop', label: '裁剪' },
  { icon: 'eyedropper', label: '吸管' },
  { icon: 'healing', label: '污点修复画笔' },
  { icon: 'brush', label: '画笔' },
  { icon: 'stamp', label: '仿制图章' },
  { icon: 'history', label: '历史记录画笔' },
  { icon: 'eraser', label: '橡皮擦' },
  { icon: 'gradient', label: '渐变' },
  { icon: 'drop', label: '模糊' },
  { icon: 'dodge', label: '减淡' },
  { icon: 'pen', label: '钢笔' },
  { icon: 'type', label: '横排文字' },
  { icon: 'arrow', label: '路径选择' },
  { icon: 'rect', label: '矩形' },
  { icon: 'hand', label: '抓手' },
  { icon: 'zoom', label: '缩放', plain: true },
  { icon: 'more', label: '编辑工具栏' },
];

function ToolFace({ icon }: { icon: string }) {
  if (icon === 'gradient') return <GradientChip />;
  if (icon === 'type') return <TypeGlyph $size={17}>T</TypeGlyph>;
  return <Icon name={icon} />;
}

function Toolbox() {
  return (
    <ToolPanel>
      <DockHeader>
        <CollapseButton aria-label="折叠工具栏">
          <DoubleChevron />
        </CollapseButton>
      </DockHeader>
      <GripRow>
        <Grip />
      </GripRow>
      <ToolGrid $top={13}>
        {tools.map((t) => (
          <ToolButton key={t.icon} aria-label={t.label} $flyout={!t.plain} $active={t.icon === 'brush'}>
            <ToolFace icon={t.icon} />
          </ToolButton>
        ))}
      </ToolGrid>
      <ColorWell>
        <Swatch aria-label="前景色" />
        <Swatch aria-label="背景色" $back />
        <SwapButton aria-label="切换前景色和背景色">
          <Icon name="swap" size={15} />
        </SwapButton>
        <DefaultButton aria-label="默认颜色">
          <svg width="11" height="11" viewBox="0 0 11 11">
            <rect x="4" y="4" width="6" height="6" fill="#ddd" />
            <rect x=".5" y=".5" width="6" height="6" fill="#000" stroke="#ddd" />
          </svg>
        </DefaultButton>
      </ColorWell>
      <ToolGrid $top={8}>
        <ToolButton aria-label="快速蒙版">
          <Icon name="quickmask" />
        </ToolButton>
        <ToolButton aria-label="屏幕模式" $flyout>
          <Icon name="screens" />
        </ToolButton>
      </ToolGrid>
      <Cursor width="12" height="18" viewBox="0 0 12 18">
        <path d="M1 1v13l3-2.800 2.200 5 2.300-1-2.200-4.700h4.200z" fill="#000" stroke="#fff" strokeWidth="1.200" />
      </Cursor>
    </ToolPanel>
  );
}

function LayersPanel() {
  return (
    <>
      <Tabs items={['颜色', '色板', '图层']} active="图层" />
      <Row $h={32} $top={4}>
        <Dropdown
          label="过滤类型"
          value="类型"
          w={77}
          pad={20}
          lead={
            <svg className="lead" width="12" height="12" viewBox="0 0 12 12" fill="none" stroke="#ddd" strokeWidth="1.300">
              <circle cx="7" cy="4.500" r="3.300" />
              <path d="M4.500 7L1 10.800" />
            </svg>
          }
        />
        <FilterIcons>
          <IconButton $w={20} aria-label="像素图层"><Icon name="image" /></IconButton>
          <IconButton $w={20} aria-label="调整图层"><Icon name="halfcircle" /></IconButton>
          <IconButton $w={20} aria-label="文字图层"><TypeGlyph $size={13}>T</TypeGlyph></IconButton>
          <IconButton $w={20} aria-label="形状图层"><Icon name="shape" size={18} /></IconButton>
          <IconButton $w={20} aria-label="智能对象"><Icon name="smart" /></IconButton>
        </FilterIcons>
        <FilterSwitch type="checkbox" aria-label="图层过滤" defaultChecked />
      </Row>
      <Row $h={27}>
        <Dropdown label="混合模式" value="正常" w={114} />
        <Spacer />
        <PercentField label="不透明度" />
      </Row>
      <Row $h={28}>
        <FieldLabel as="span">锁定:</FieldLabel>
        <IconButton $w={24} aria-label="锁定透明像素"><Icon name="checker" /></IconButton>
        <IconButton aria-label="锁定图像像素"><Icon name="brush" size={16} /></IconButton>
        <IconButton aria-label="锁定位置"><Icon name="move" size={16} /></IconButton>
        <IconButton aria-label="锁定画板"><Icon name="artboard" size={18} /></IconButton>
        <IconButton aria-label="锁定全部"><Icon name="lock" /></IconButton>
        <Spacer />
        <PercentField label="填充" />
      </Row>
      <LayerList>
        <LayerItems>
          <LayerItem>
            <IconButton $w={31} aria-label="显示图层"><Icon name="eye" /></IconButton>
            <LayerName>
              <svg width="36" height="23" viewBox="0 0 36 23">
                <rect x="2.500" y="2.500" width="31" height="18" fill={color.red} stroke="#222" />
                <rect x="8" y="6" width="21" height="9" fill="#fff" />
                <path d="M.8 7V.8H12M24 .8h11.200V7M35.200 16v6.200H24M12 22.200H.8V16" fill="none" stroke="#fff" strokeWidth="1.400" />
              </svg>
              图层 1
            </LayerName>
          </LayerItem>
        </LayerItems>
        <PanelScroll />
      </LayerList>
      <PanelFooter>
        <IconButton $dim aria-label="链接图层"><Icon name="link" /></IconButton>
        <IconButton aria-label="图层样式"><MenuMark><FxGlyph>fx</FxGlyph></MenuMark></IconButton>
        <IconButton aria-label="添加蒙版"><Icon name="mask" /></IconButton>
        <IconButton aria-label="新建调整图层"><MenuMark><Icon name="halfcircle" /></MenuMark></IconButton>
        <IconButton aria-label="新建组"><Icon name="folder" /></IconButton>
        <IconButton aria-label="新建图层"><Icon name="page" /></IconButton>
        <IconButton $dim aria-label="删除图层"><Icon name="trash" /></IconButton>
      </PanelFooter>
    </>
  );
}

export default function App() {
  return (
    <Page>
      <GlobalStyle />
      <MenuBar>
        <FaApple size={16} />
        <MenuList>
          <MenuItem $bold>Photoshop CC</MenuItem>
          {menus.map((m) => (
            <MenuItem key={m}>{m}</MenuItem>
          ))}
        </MenuList>
        <StatusList>
          <StatusIcons />
        </StatusList>
      </MenuBar>

      <AppWindow>
        <TitleBar>
          <Lights>
            <Light $color="#e8455a" $edited aria-label="关闭" />
            <Light $color="#f5b32f" aria-label="最小化" />
            <Light $color="#33d245" aria-label="缩放" />
          </Lights>
          <h1>Adobe Photoshop CC 2017</h1>
        </TitleBar>

        <OptionsBar>
          <Grip $vertical />
          <IconButton $w={30} aria-label="画笔工具"><Icon name="brush" size={19} /></IconButton>
          <Chevron />
          <Divider $space={9} />
          <BrushPreset>175</BrushPreset>
          <IconButton $w={16} aria-label="画笔预设"><Chevron /></IconButton>
          <IconButton $w={33} aria-label="画笔面板"><Icon name="brushpanel" /></IconButton>
          <Divider $space={4} />
          <FieldGroup>
            <FieldLabel $gap={7}>
              模式:
              <Dropdown label="模式" value="正常" w={135} />
            </FieldLabel>
            <PercentField label="不透明度" />
          </FieldGroup>
          <IconButton $w={38} aria-label="不透明度压力"><Icon name="pressure" size={18} /></IconButton>
          <Divider $space={2} />
          <PercentField label="流量" />
          <IconButton $w={38} aria-label="喷枪"><Icon name="airbrush" size={18} /></IconButton>
          <Divider $space={0} />
          <IconButton $w={38} aria-label="大小压力"><Icon name="target" size={19} /></IconButton>
          <Spacer />
          <Dropdown label="工作区" value="基本功能" w={95} />
        </OptionsBar>

        <Workspace>
          <Toolbox />
          <Document>
            <DocTabs>
              <DocTab>
                <button aria-label="关闭文档">
                  <svg width="7" height="7" viewBox="0 0 7 7" stroke="#aaa" strokeWidth="1.200">
                    <path d="M1 1l5 5M6 1L1 6" />
                  </svg>
                </button>
                未标题-1 @ 66.7% (图层 1, RGB/8#) *
              </DocTab>
            </DocTabs>
            <Stage>
              <Canvas>
                <Artboard />
              </Canvas>
              <ScrollTrack />
            </Stage>
            <StatusBar>
              <StatusInfo>
                <input aria-label="缩放比例" defaultValue="66.67%" />
                <span>文档:3.00M/3.00M</span>
                <Spacer />
                <svg width="5" height="10" viewBox="0 0 5 10" fill="none" stroke="#ccc" strokeWidth="1.200">
                  <path d="M1 1q3 4 0 8" />
                </svg>
              </StatusInfo>
            </StatusBar>
          </Document>

          <IconDock>
            <DockHeader $end>
              <CollapseButton aria-label="展开面板">
                <DoubleChevron />
              </CollapseButton>
            </DockHeader>
            {[
              { icon: 'historyPanel', label: '历史记录' },
              { icon: 'props', label: '属性' },
              { icon: 'layercomp', label: '图层复合' },
            ].map((d) => (
              <DockGroup key={d.icon}>
                <Grip />
                <DockButton aria-label={d.label}><Icon name={d.icon} /></DockButton>
              </DockGroup>
            ))}
            <DockGroup>
              <Grip />
              <DockButton aria-label="字符">
                <TypeGlyph $size={17} $family="sans">A</TypeGlyph>
                <Caret />
              </DockButton>
              <DockButton aria-label="段落">
                <TypeGlyph $size={20} $family="sans">¶</TypeGlyph>
              </DockButton>
            </DockGroup>
          </IconDock>

          <Panels>
            <DockHeader $end>
              <CollapseButton aria-label="折叠面板">
                <DoubleChevron right />
              </CollapseButton>
            </DockHeader>
            <Panel $min={421}>
              <LayersPanel />
            </Panel>
            <Panel>
              <Tabs items={['调整', '样式']} active="样式" />
              <StyleArea>
                <StyleGrid>
                  <StyleCell $on aria-label="无样式">
                    <svg width="21" height="21" viewBox="0 0 21 21">
                      <rect x="3" y="3" width="15" height="15" fill="#fff" stroke="#000" />
                      <path d="M1 1l19 19" stroke="#a01020" strokeWidth="1.600" />
                    </svg>
                  </StyleCell>
                  {chips.map((c, i) => (
                    <StyleCell key={i} aria-label={`样式 ${i + 1}`}>
                      <Chip $bg={c.bg} $edge={c.edge} $big={c.big} $shadow={c.shadow} />
                    </StyleCell>
                  ))}
                  {Array.from({ length: 6 }, (_, i) => (
                    <StyleCell key={`next${i}`} aria-label={`样式 ${i + 24}`} />
                  ))}
                </StyleGrid>
                <Spacer />
                <PanelScroll $thumb />
              </StyleArea>
              <PanelFooter $gap={8}>
                <IconButton $dim aria-label="清除样式"><Icon name="none" /></IconButton>
                <IconButton $dim aria-label="新建样式"><Icon name="page" /></IconButton>
                <IconButton $dim aria-label="删除样式"><Icon name="trash" /></IconButton>
              </PanelFooter>
            </Panel>
            <Panel $grow>
              <Tabs items={['路径']} active="路径" />
              <PathsBody>
                <PanelScroll />
              </PathsBody>
              <PanelFooter>
                <IconButton $dim aria-label="填充路径"><Icon name="dot" /></IconButton>
                <IconButton $dim aria-label="描边路径"><Icon name="ring" /></IconButton>
                <IconButton $dim aria-label="载入选区"><Icon name="dashring" /></IconButton>
                <IconButton aria-label="生成工作路径"><Icon name="pathring" /></IconButton>
                <IconButton aria-label="添加路径蒙版"><Icon name="mask" /></IconButton>
                <IconButton aria-label="新建路径"><Icon name="page" /></IconButton>
                <IconButton $dim aria-label="删除路径"><Icon name="trash" /></IconButton>
              </PanelFooter>
            </Panel>
          </Panels>
        </Workspace>
      </AppWindow>
    </Page>
  );
}
